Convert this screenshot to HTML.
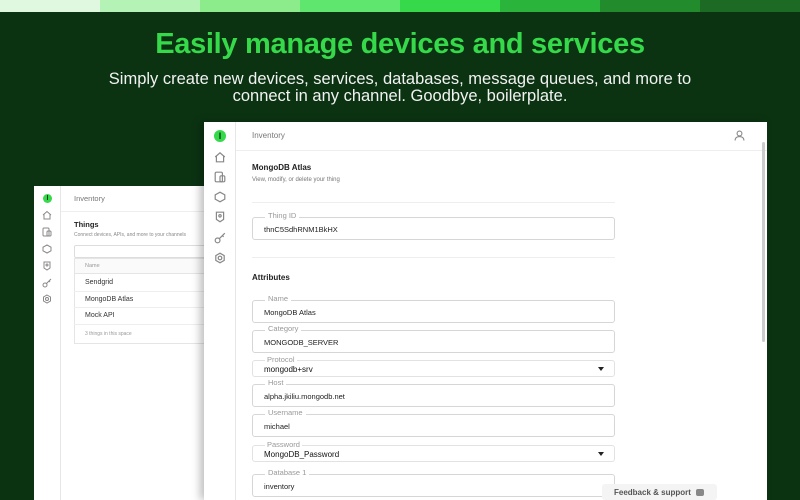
<!DOCTYPE html>
<html><head><meta charset="utf-8"><style>
*{margin:0;padding:0;box-sizing:border-box}
body{width:800px;height:500px;overflow:hidden;background:#0b3312;font-family:"Liberation Sans",sans-serif;position:relative}
.bar{position:absolute;top:0;left:0;width:800px;height:12px;display:flex}
.bar div{flex:1}
h1{position:absolute;top:28px;left:0;width:800px;text-align:center;color:#35d94a;font-size:29px;font-weight:bold;letter-spacing:-0.3px}
.sub{position:absolute;top:71px;left:0;width:800px;text-align:center;color:#f2f2f2;font-size:16.5px;line-height:17px}
.win{position:absolute;background:#fff;overflow:hidden}
.side{position:absolute;left:0;top:0;bottom:0;border-right:1px solid #e6e6e6;background:#fff}
.logo{position:absolute;border-radius:50%;background:#35d94a;color:#0b3312;font-weight:bold;text-align:center}
svg.i{position:absolute;fill:none;stroke:#888;stroke-width:1}
.t{position:absolute;white-space:nowrap}
.fld{position:absolute;left:48px;width:363px;border:1px solid #d6d6d6;border-radius:3px;height:23px}
.fld .lb{position:absolute;top:-7px;left:12px;background:#fff;padding:0 3px;font-size:7.5px;color:#999}
.fld .v{position:absolute;top:7px;left:11px;font-size:7.5px;color:#222}
.sel{position:absolute;left:48px;width:363px;height:17px;border:1px solid #e2e2e2;border-radius:3px}
.sel .v{position:absolute;top:4px;left:11px;font-size:8px;color:#111}
.sel .lb{position:absolute;top:-6px;left:12px;background:#fff;padding:0 2px;font-size:7.5px;color:#999}
.sel .ar{position:absolute;right:10px;top:6px;border-left:3.5px solid transparent;border-right:3.5px solid transparent;border-top:4px solid #222}
</style></head><body>
<div class="bar"><div style="background:#e0f8e0"></div><div style="background:#b5f2b5"></div><div style="background:#8cec8c"></div><div style="background:#5fe66f"></div><div style="background:#35d94a"></div><div style="background:#2bb43b"></div><div style="background:#228b2c"></div><div style="background:#1c6a24"></div></div>
<h1>Easily manage devices and services</h1>
<div class="sub">Simply create new devices, services, databases, message queues, and more to<br>connect in any channel. Goodbye, boilerplate.</div>

<div class="win" style="left:34px;top:186px;width:180px;height:314px">
 <div class="side" style="width:27px"></div>
 <div class="logo" style="left:9px;top:8px;width:9px;height:9px;font-size:7px;line-height:9px">I</div>
 <svg class="i" style="left:8px;top:24px" width="10" height="10" viewBox="0 0 10 10"><path d="M1 5L5 1.5 9 5M2 4.5V9h6V4.5"/></svg>
 <svg class="i" style="left:8px;top:41px" width="10" height="10" viewBox="0 0 10 10"><rect x="1" y="1" width="6" height="8" rx="1"/><rect x="5" y="4" width="4" height="5" rx="1"/></svg>
 <svg class="i" style="left:8px;top:58px" width="10" height="10" viewBox="0 0 10 10"><path d="M5 1L9 3.2V6.8L5 9 1 6.8V3.2Z"/></svg>
 <svg class="i" style="left:8px;top:75px" width="10" height="10" viewBox="0 0 10 10"><path d="M2 1h6v6L5 9 2 7Z"/><circle cx="5" cy="4" r="1"/></svg>
 <svg class="i" style="left:8px;top:92px" width="10" height="10" viewBox="0 0 10 10"><circle cx="3" cy="7" r="2"/><path d="M4.5 5.5L9 1M7 3l1 1"/></svg>
 <svg class="i" style="left:8px;top:108px" width="10" height="10" viewBox="0 0 10 10"><circle cx="5" cy="5" r="1.5"/><path d="M5 1l3.5 2v4L5 9 1.5 7V3Z"/></svg>
 <div style="position:absolute;left:27px;right:0;top:25px;border-top:1px solid #eee"></div>
 <div class="t" style="left:40px;top:8px;font-size:7.5px;color:#777">Inventory</div>
 <div class="t" style="left:40px;top:34px;font-size:7.5px;font-weight:bold;color:#222">Things</div>
 <div class="t" style="left:40px;top:46px;font-size:5px;color:#888">Connect devices, APIs, and more to your channels</div>
 <div style="position:absolute;left:40px;top:59px;width:150px;height:13px;border:1px solid #ddd;border-radius:2px"></div>
 <div style="position:absolute;left:40px;top:72px;width:150px;height:86px;border:1px solid #e5e5e5;background:#fff"></div>
 <div style="position:absolute;left:40px;top:72px;width:150px;height:16px;background:#fafafa;border:1px solid #e5e5e5"></div>
 <div class="t" style="left:51px;top:77px;font-size:5.5px;color:#999">Name</div>
 <div class="t" style="left:51px;top:93px;font-size:7px;color:#333">Sendgrid</div>
 <div style="position:absolute;left:40px;top:105px;width:150px;border-top:1px solid #eee"></div>
 <div class="t" style="left:51px;top:110px;font-size:7px;color:#333">MongoDB Atlas</div>
 <div style="position:absolute;left:40px;top:121px;width:150px;border-top:1px solid #eee"></div>
 <div class="t" style="left:51px;top:126px;font-size:7px;color:#333">Mock API</div>
 <div style="position:absolute;left:40px;top:138px;width:150px;border-top:1px solid #eee"></div>
 <div class="t" style="left:51px;top:145px;font-size:5px;color:#999">3 things in this space</div>
</div>

<div class="win" style="left:204px;top:122px;width:563px;height:378px;box-shadow:-4px 0 8px rgba(0,0,0,.25)">
 <div class="side" style="width:32px"></div>
 <div class="logo" style="left:10px;top:8px;width:12px;height:12px;font-size:9px;line-height:12px">I</div>
 <svg class="i" style="left:10px;top:29px" width="12" height="12" viewBox="0 0 10 10"><path d="M1 5L5 1.5 9 5M2 4.5V9h6V4.5"/></svg>
 <svg class="i" style="left:10px;top:49px" width="12" height="12" viewBox="0 0 10 10"><rect x="1" y="1" width="6" height="8" rx="1"/><rect x="5" y="4" width="4" height="5" rx="1"/></svg>
 <svg class="i" style="left:10px;top:69px" width="12" height="12" viewBox="0 0 10 10"><path d="M5 1L9 3.2V6.8L5 9 1 6.8V3.2Z"/></svg>
 <svg class="i" style="left:10px;top:89px" width="12" height="12" viewBox="0 0 10 10"><path d="M2 1h6v6L5 9 2 7Z"/><circle cx="5" cy="4" r="1"/></svg>
 <svg class="i" style="left:10px;top:110px" width="12" height="12" viewBox="0 0 10 10"><circle cx="3" cy="7" r="2"/><path d="M4.5 5.5L9 1M7 3l1 1"/></svg>
 <svg class="i" style="left:10px;top:130px" width="12" height="12" viewBox="0 0 10 10"><circle cx="5" cy="5" r="1.5"/><path d="M5 1l3.5 2v4L5 9 1.5 7V3Z"/></svg>
 <div style="position:absolute;left:32px;right:0;top:28px;border-top:1px solid #eee"></div>
 <div class="t" style="left:48px;top:9px;font-size:8px;color:#777">Inventory</div>
 <svg class="i" style="left:530px;top:8px" width="11" height="11" viewBox="0 0 10 10"><circle cx="5" cy="3.2" r="2.2"/><path d="M1 9.5c0-2.5 2-3.5 4-3.5s4 1 4 3.5"/></svg>
 <div class="t" style="left:48px;top:41px;font-size:8px;font-weight:bold;color:#222">MongoDB Atlas</div>
 <div class="t" style="left:48px;top:55px;font-size:6px;color:#777">View, modify, or delete your thing</div>
 <div style="position:absolute;left:48px;top:80px;width:363px;border-top:1px solid #eee"></div>
 <div class="fld" style="top:95px"><span class="lb">Thing ID</span><span class="v">thnC5SdhRNM1BkHX</span></div>
 <div style="position:absolute;left:48px;top:135px;width:363px;border-top:1px solid #eee"></div>
 <div class="t" style="left:48px;top:151px;font-size:8px;font-weight:bold;color:#222">Attributes</div>
 <div class="fld" style="top:178px"><span class="lb">Name</span><span class="v">MongoDB Atlas</span></div>
 <div class="fld" style="top:208px"><span class="lb">Category</span><span class="v">MONGODB_SERVER</span></div>
 <div class="sel" style="top:238px"><span class="lb">Protocol</span><span class="v">mongodb+srv</span><span class="ar"></span></div>
 <div class="fld" style="top:262px"><span class="lb">Host</span><span class="v">alpha.jkiliu.mongodb.net</span></div>
 <div class="fld" style="top:292px"><span class="lb">Username</span><span class="v">michael</span></div>
 <div class="sel" style="top:323px"><span class="lb">Password</span><span class="v">MongoDB_Password</span><span class="ar"></span></div>
 <div class="fld" style="top:352px"><span class="lb">Database 1</span><span class="v">inventory</span></div>
 <div style="position:absolute;left:558px;top:20px;width:3px;height:200px;background:#ccc;border-radius:2px"></div>
 <div style="position:absolute;left:398px;top:362px;width:115px;height:16px;background:#f4f4f4;border-radius:3px"></div>
 <div class="t" style="left:410px;top:366px;font-size:8px;font-weight:bold;color:#555">Feedback &amp; support</div>
 <div style="position:absolute;left:492px;top:367px;width:8px;height:7px;background:#888;border-radius:2px"></div>
</div>
</body></html>
